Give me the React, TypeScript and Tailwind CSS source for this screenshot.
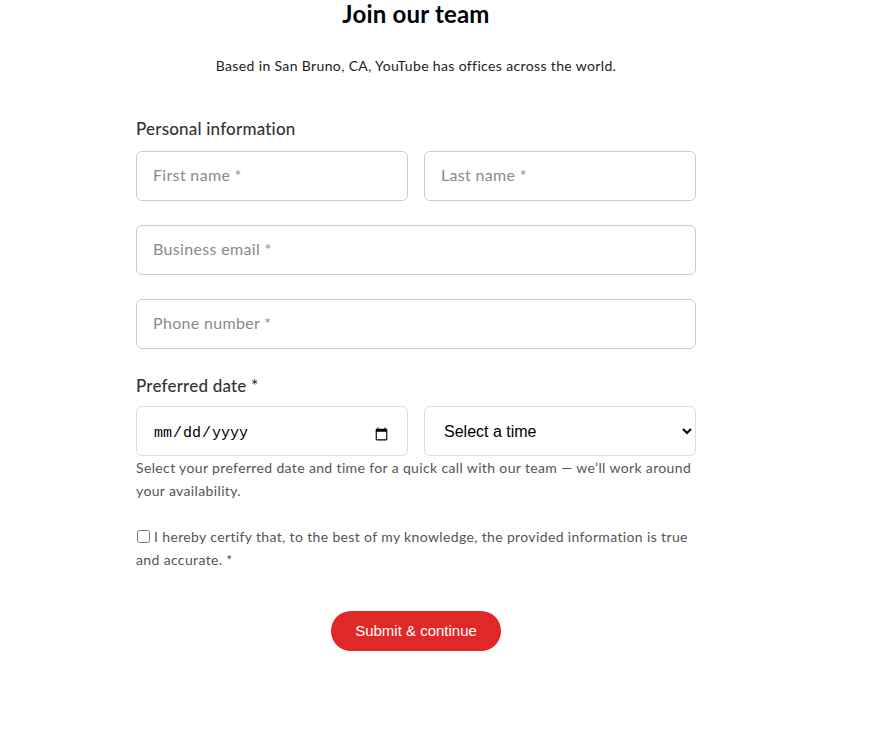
export default function App() {
  const field =
    'h-[50px] w-full min-w-0 rounded-md border border-[#cccccc] bg-white px-4 pb-[3px] text-base tracking-[0.33px] text-[#222] placeholder:text-[#8a8a8a] outline-none';

  return (
    <div className="min-h-screen bg-white font-['Lato','Noto_Sans',sans-serif] text-[#222]">
      <div className="flex w-[832px] justify-center">
        <div className="w-[560px]">
          {/* Heading */}
          <h1 className="text-center text-[24px] font-bold leading-[28px] tracking-[0.2px] text-black">
            Join our team
          </h1>
          <p className="mt-[28px] text-center text-[14px] leading-[20px] tracking-[0.36px] text-[#222]">
            Based in San Bruno, CA, YouTube has offices across the world.
          </p>

          <form className="mt-[43px]">
            <h2 className="text-[17px] font-medium leading-[20px] tracking-[0.2px] text-[#333]">
              Personal information
            </h2>

            <div className="mt-[12px] grid grid-cols-2 gap-4">
              <input className={field} placeholder="First name *" />
              <input className={field} placeholder="Last name *" />
            </div>
            <input className={`${field} mt-[24px] block`} placeholder="Business email *" />
            <input className={`${field} mt-[24px] block`} placeholder="Phone number *" />

            <label className="mt-[27px] block text-[17px] font-medium leading-[20px] tracking-[0.2px] text-[#333]">
              Preferred date *
            </label>
            <div className="mt-[10px] grid grid-cols-2 gap-4">
              <input
                type="date"
                className="h-[50px] w-full min-w-0 rounded-md border border-[#dddddd] bg-white px-4 pt-[6px] font-mono text-[15px] text-black outline-none"
              />
              <select
                defaultValue=""
                className="h-[50px] w-full min-w-0 rounded-md border border-[#dddddd] bg-white pr-[8px] pl-[15px] font-['Liberation_Sans',Arial,sans-serif] text-[16px] text-black outline-none"
              >
                <option value="" disabled>
                  Select a time
                </option>
                <option>9:00 AM</option>
                <option>11:00 AM</option>
                <option>2:00 PM</option>
                <option>4:00 PM</option>
              </select>
            </div>
            <p className="text-[14px] leading-[23px] tracking-[0.36px] text-[#555]">
              Select your preferred date and time for a quick call with our team — we’ll work around your
              availability.
            </p>

            <label className="mt-[23px] block text-[14px] leading-[23px] tracking-[0.36px] text-[#555]">
              <input type="checkbox" className="mr-[4px] ml-[1px] inline-block h-[13px] w-[13px] align-[-1px]" />I
              hereby certify that, to the best of my knowledge, the provided information is true and accurate. *
            </label>

            <div className="mt-[40px] flex justify-center">
              <button
                type="button"
                className="h-[40px] w-[170px] rounded-full bg-[#e02828] font-['Liberation_Sans',Arial,sans-serif] text-[15px] text-white"
              >
                Submit &amp; continue
              </button>
            </div>
          </form>
        </div>
      </div>
    </div>
  );
}
